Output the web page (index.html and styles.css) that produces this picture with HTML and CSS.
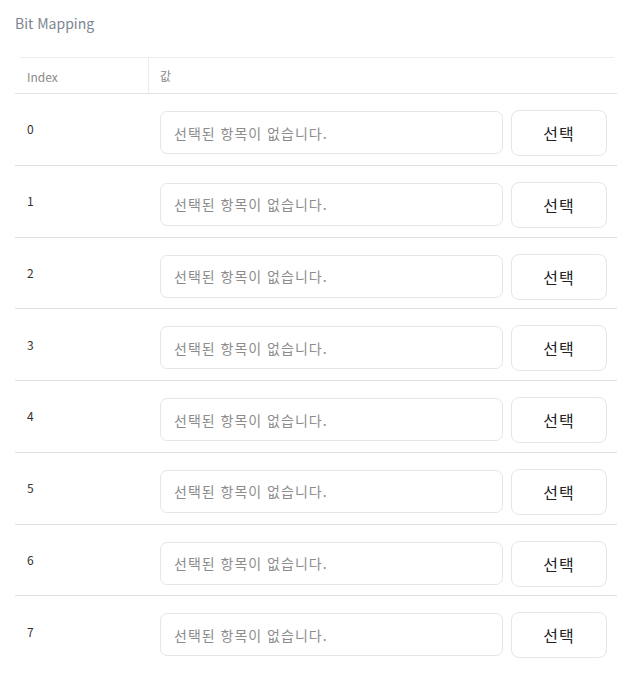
FILE: index.html
```html
<!DOCTYPE html>
<html lang="ko">
<head>
<meta charset="utf-8">
<link rel="stylesheet" href="styles.css">
</head>
<body>
<div class="page">
  <div class="title">Bit Mapping</div>
  <div class="table">
    <div class="head">
      <div class="hcell idx">Index</div>
      <div class="hcell val">값</div>
    </div>
    <div class="row"><div class="cell idx">0</div><div class="cell val"><div class="input">선택된 항목이 없습니다.</div><button class="btn">선택</button></div></div>
    <div class="row"><div class="cell idx">1</div><div class="cell val"><div class="input">선택된 항목이 없습니다.</div><button class="btn">선택</button></div></div>
    <div class="row"><div class="cell idx">2</div><div class="cell val"><div class="input">선택된 항목이 없습니다.</div><button class="btn">선택</button></div></div>
    <div class="row"><div class="cell idx">3</div><div class="cell val"><div class="input">선택된 항목이 없습니다.</div><button class="btn">선택</button></div></div>
    <div class="row"><div class="cell idx">4</div><div class="cell val"><div class="input">선택된 항목이 없습니다.</div><button class="btn">선택</button></div></div>
    <div class="row"><div class="cell idx">5</div><div class="cell val"><div class="input">선택된 항목이 없습니다.</div><button class="btn">선택</button></div></div>
    <div class="row"><div class="cell idx">6</div><div class="cell val"><div class="input">선택된 항목이 없습니다.</div><button class="btn">선택</button></div></div>
    <div class="row last"><div class="cell idx">7</div><div class="cell val"><div class="input">선택된 항목이 없습니다.</div><button class="btn">선택</button></div></div>
  </div>
</div>
</body>
</html>
```

FILE: styles.css
```css
html, body {
  margin: 0;
  padding: 0;
  background: #ffffff;
  overflow: hidden;
}
body {
  font-family: "Noto Sans CJK KR", "Noto Sans", sans-serif;
  color: #222;
}
.page {
  padding: 13px 0 0 15px;
}
.title {
  font-size: 14px;
  line-height: 20px;
  color: #7b8591;
  height: 44px;
}
.table {
  width: 602px;
}
.head {
  display: flex;
  height: 36px;
  position: relative;
  border-bottom: 1px solid #e3e3e3;
}
.head::before {
  content: "";
  position: absolute;
  left: 5px;
  right: 3px;
  top: 0;
  height: 1px;
  background: #ececec;
}
.hcell {
  font-size: 12px;
  color: #8a8a8a;
  display: flex;
  align-items: center;
  padding-top: 1px;
}
.hcell.idx {
  width: 121px;
  padding-left: 12px;
  border-right: 1px solid #ececec;
  margin-top: 1px;
}
.hcell.val {
  padding-left: 11px;
}
.row {
  display: flex;
  height: 70.75px;
  border-bottom: 1px solid #e0e0e0;
  position: relative;
}
.row.last {
  border-bottom: none;
}
.row.last::after {
  content: "";
  position: absolute;
  left: 5px;
  right: 4px;
  bottom: -1px;
  height: 1px;
  background: #e0e0e0;
}
.cell.idx {
  width: 121px;
  padding-left: 12px;
  font-size: 12px;
  color: #333;
  display: flex;
  align-items: center;
  padding-bottom: 1px;
  margin-right: 1px;
}
.cell.val {
  flex: 1;
  display: flex;
  align-items: flex-start;
  gap: 8px;
  padding: 16px 10px 0 11px;
}
.input {
  flex: 1;
  height: 41px;
  margin-top: 1px;
  border: 1px solid #e6e6e6;
  border-radius: 7px;
  box-sizing: content-box;
  padding-left: 13px;
  display: flex;
  align-items: center;
  font-size: 14px;
  letter-spacing: 1px;
  color: #8c8c8c;
}
.btn {
  width: 96px;
  height: 46px;
  border: 1px solid #e6e6e6;
  border-radius: 8px;
  background: #fff;
  font-family: "Noto Sans CJK KR", "Noto Sans", sans-serif;
  font-size: 16px;
  letter-spacing: 1px;
  color: #222;
  padding: 0;
}
```
